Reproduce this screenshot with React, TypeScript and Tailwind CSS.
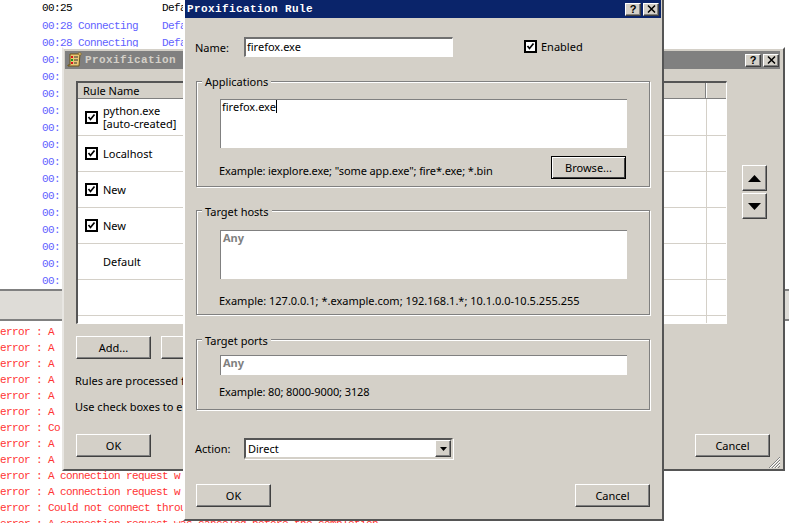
import React from "react";

const ui = "font-['Noto_Sans',sans-serif] text-[11px] leading-[13px] text-black";
const mono = "font-['Liberation_Mono',monospace] text-[11px] tracking-[-0.6px] whitespace-pre";
const face = "bg-[#d4d0c8]";
const raised = "border border-t-white border-l-white border-r-[#404040] border-b-[#404040] shadow-[inset_-1px_-1px_0_#808080] bg-[#d4d0c8]";
const titleFont = "font-['Liberation_Mono',monospace] font-bold text-[11px] leading-[18px] tracking-[0.4px] whitespace-pre";

function Btn({ label, className = "" }: { label: string; className?: string }) {
  return <div className={`${raised} w-[75px] h-[23px] flex items-center justify-center pb-[1px] ${className}`}>{label}</div>;
}

function CapBtn({ kind }: { kind: "help" | "close" }) {
  return (
    <div className={`${raised} w-[16px] h-[13px] flex items-center justify-center`}>
      {kind === "help" ? (
        <span className="font-['Liberation_Sans',sans-serif] font-bold text-[11px] leading-[11px] text-black">?</span>
      ) : (
        <svg width="9" height="8" viewBox="0 0 9 8"><path d="M1 0.5L8 7.5M8 0.5L1 7.5" stroke="#000" strokeWidth="1.5" /></svg>
      )}
    </div>
  );
}

function Check({ className = "" }: { className?: string }) {
  return (
    <svg width="13" height="13" viewBox="0 0 13 13" className={`shrink-0 ${className}`}>
      <rect x="1" y="1" width="11" height="11" fill="#fff" stroke="#000" strokeWidth="2" />
      <path d="M3.5 6L5.5 8.5L9.5 3.5" fill="none" stroke="#000" strokeWidth="1.7" />
    </svg>
  );
}

function Group({ title, className, labelTop, children }: { title: string; className: string; labelTop: string; children: React.ReactNode }) {
  return (
    <div className={`relative w-[454px] border border-[#808080] shadow-[1px_1px_0_#fff,inset_1px_1px_0_#fff] ${className}`}>
      <span className={`absolute left-[5px] ${labelTop} px-[3px] ${face}`}>{title}</span>
      {children}
    </div>
  );
}

function AnyBox({ h }: { h: string }) {
  return (
    <div className={`${h} ml-[23px] w-[407px] bg-white border-t border-l border-[#808080] pl-[2px] font-bold text-[#808080]`}>Any</div>
  );
}

const rows = [
  { t: ["python.exe", "[auto-created]"], c: true },
  { t: ["Localhost"], c: true },
  { t: ["New"], c: true },
  { t: ["New"], c: true },
  { t: ["Default"], c: false },
  { t: [], c: false },
];

const red = [
  "error : A",
  "error : A",
  "error : A",
  "error : A",
  "error : A",
  "error : A",
  "error : Co",
  "error : A",
  "error : A",
  "error : A connection request w",
  "error : A connection request w",
  "error : Could not connect throu",
  "error : A connection request was canceled before the completion",
];

export default function App() {
  return (
    <div className="relative w-[789px] h-[523px] overflow-hidden bg-white">
      {/* background log window */}
      <div className="h-[289px] overflow-hidden pl-[42px] pt-[1px]">
        <div className={`${mono} h-[17px] leading-[15px] text-black`}>{"00:25               Defa"}</div>
        <div className={`${mono} h-[17px] leading-[17px] text-[#6262ff]`}>{"00:28 Connecting    Defa"}</div>
        <div className={`${mono} h-[17px] leading-[17px] text-[#6262ff]`}>{"00:28 Connecting    Defa"}</div>
        {Array.from({ length: 14 }).map((_, i) => (
          <div key={i} className={`${mono} h-[17px] leading-[17px] text-[#6262ff]`}>{"00:"}</div>
        ))}
      </div>
      <div className="h-[32px] border-t-2 border-b-2 border-[#808080] bg-[#dedcd7]" />
      <div className="pt-[3px]">
        {red.map((r, i) => (
          <div key={i} className={`${mono} h-[16px] leading-[16px] text-[#ff3333]`}>{r}</div>
        ))}
      </div>

      {/* rear window */}
      <div className={`absolute left-[62px] top-[47px] w-[723px] h-[424px] ${face} ${ui} border-2 border-t-white border-l-[#e8e6e2] border-r-[#555555] border-b-[#555555]`}>
        <div className="ml-[1px] mr-[3px] mt-[2px] h-[18px] bg-[#808080] flex items-center">
          <svg width="15" height="16" viewBox="0 0 15 16" className="ml-[2px] shrink-0">
            <path d="M3 2H13L12 14H1V13H3Z" fill="#ecc878" stroke="#6b5418" strokeWidth="1" />
            <path d="M11 1H14V3H12Z" fill="#f4dc98" stroke="#8a7028" strokeWidth="0.8" />
            <rect x="4" y="4" width="2" height="2" fill="#d81818" />
            <rect x="4" y="7" width="2" height="2" fill="#18a018" />
            <rect x="4" y="10" width="2" height="2" fill="#d81818" />
            <path d="M7 5H11M7 8H11M7 11H10" stroke="#333" strokeWidth="1" />
          </svg>
          <span className={`${titleFont} ml-[3px] text-[#d4d0c8]`}>Proxification</span>
          <div className="ml-auto mr-[1px] flex gap-[2px]"><CapBtn kind="help" /><CapBtn kind="close" /></div>
        </div>
        <div className="ml-[12px] mt-[12px] flex">
          <div className="w-[651px] h-[243px] border-t-2 border-l-2 border-t-[#555555] border-l-[#555555] border-r border-b border-r-white border-b-white bg-white flex flex-col overflow-hidden">
            <div className="h-[16px] shrink-0 bg-[#d4d0c8] border-b border-[#808080] flex">
              <div className="w-[628px] border-r border-[#808080] pl-[5px] leading-[15px] shadow-[1px_0_0_#fff]">Rule Name</div>
            </div>
            <div className="flex-1 flex flex-col relative">
              {rows.map((r, i) => (
                <div key={i} className={`${i === 0 ? "h-[37px]" : "h-[36px]"} shrink-0 border-b border-[#d4d0c8] flex items-center`}>
                  <div className="w-[629px] h-full border-r border-[#d4d0c8] flex items-center">
                    <div className="w-[25px] pl-[7px]">{r.c && <Check />}</div>
                    <div>{r.t.map((x) => <div key={x}>{x}</div>)}</div>
                  </div>
                </div>
              ))}
              <div className="w-[629px] flex-1 border-r border-[#d4d0c8]" />
            </div>
          </div>
          <div className="ml-[15px] mt-[84px] flex flex-col gap-[2px]">
            <div className={`${raised} w-[25px] h-[26px] flex items-center justify-center`}>
              <svg width="13" height="7" viewBox="0 0 13 7"><path d="M6.5 0L13 7H0Z" fill="#000" /></svg>
            </div>
            <div className={`${raised} w-[25px] h-[26px] flex items-center justify-center`}>
              <svg width="13" height="7" viewBox="0 0 13 7"><path d="M0 0H13L6.5 7Z" fill="#000" /></svg>
            </div>
          </div>
        </div>
        <div className="ml-[12px] mt-[12px] flex gap-[10px]"><Btn label="Add..." /><Btn label="Edit..." /></div>
        <div className="ml-[11px] mt-[15px]">Rules are processed f</div>
        <div className="ml-[11px] mt-[13px]">Use check boxes to e</div>
        <div className="ml-[12px] mt-[21px] w-[694px] flex justify-between"><Btn label="OK" /><Btn label="Cancel" /></div>
        <svg width="13" height="13" viewBox="0 0 13 13" className="absolute right-[2px] bottom-[0px]">
          <path d="M12 1L1 12M12 4L4 12M12 7L7 12M12 10L10 12" stroke="#808080" strokeWidth="1" />
          <path d="M12 2L2 12M12 5L5 12M12 8L8 12" stroke="#fff" strokeWidth="1" />
        </svg>
      </div>

      {/* front dialog */}
      <div className={`absolute left-[183px] top-[-2px] w-[481px] h-[523px] ${face} ${ui} border-2 border-t-white border-l-white border-r-[#555555] border-b-[#555555]`}>
        <div className="mr-[1px] h-[18px] bg-[#0a246a] flex items-center">
          <span className={`${titleFont} ml-[2px] text-white`}>Proxification Rule</span>
          <div className="ml-auto mr-[2px] flex gap-[2px]"><CapBtn kind="help" /><CapBtn kind="close" /></div>
        </div>
        <div className="ml-[10px] mt-[19px] h-[20px] flex items-center">
          <span className="w-[49px]">Name:</span>
          <div className="w-[209px] h-[20px] bg-white border-t-2 border-l-2 border-t-[#707070] border-l-[#707070] border-r border-b border-r-white border-b-white pl-[1px] leading-[15px]">firefox.exe</div>
          <Check className="ml-[71px] -mt-[2px]" />
          <span className="ml-[4px] -mt-[2px]">Enabled</span>
        </div>
        <div className="ml-[11px] mt-[24px] flex flex-col gap-[23px]">
          <Group title="Applications" labelTop="top-[-7px]" className="h-[106px] pt-[17px]">
            <div className="ml-[23px] w-[407px] h-[49px] bg-white border-t border-l border-[#808080] pl-[1px] flex items-start">
              <span>firefox.exe</span><span className="w-[1px] h-[13px] bg-black" />
            </div>
            <div className="ml-[22px] mt-[8px] w-[407px] flex items-center justify-between">
              <span className="mt-[5px] tracking-[-0.1px]">Example: iexplore.exe; "some app.exe"; fire*.exe; *.bin</span>
              <div className={`w-[75px] h-[23px] border border-black shadow-[inset_1px_1px_0_#fff,inset_-1px_-1px_0_#404040] ${face} flex items-center justify-center pb-[1px]`}>Browse...</div>
            </div>
          </Group>
          <Group title="Target hosts" labelTop="top-[-6px]" className="h-[105px] pt-[19px]">
            <AnyBox h="h-[49px]" />
            <div className="ml-[22px] mt-[15px]">Example: 127.0.0.1; *.example.com; 192.168.1.*; 10.1.0.0-10.5.255.255</div>
          </Group>
          <Group title="Target ports" labelTop="top-[-6px]" className="h-[71px] mt-[1px] pt-[15px]">
            <AnyBox h="h-[20px]" />
            <div className="ml-[22px] mt-[10px] tracking-[-0.1px]">Example: 80; 8000-9000; 3128</div>
          </Group>
        </div>
        <div className="ml-[10px] mt-[28px] h-[21px] flex items-center">
          <span className="w-[49px]">Action:</span>
          <div className="w-[209px] h-[21px] bg-white border-2 border-t-[#555555] border-l-[#555555] border-r-[#d4d0c8] border-b-[#d4d0c8] shadow-[1px_1px_0_#fff] flex items-center pl-[2px]">
            <span className="flex-1">Direct</span>
            <div className={`${raised} w-[16px] h-[17px] flex items-center justify-center`}>
              <svg width="7" height="4" viewBox="0 0 7 4"><path d="M0 0H7L3.5 4Z" fill="#000" /></svg>
            </div>
          </div>
        </div>
        <div className="ml-[11px] mt-[25px] w-[454px] flex justify-between"><Btn label="OK" /><Btn label="Cancel" /></div>
      </div>
    </div>
  );
}
